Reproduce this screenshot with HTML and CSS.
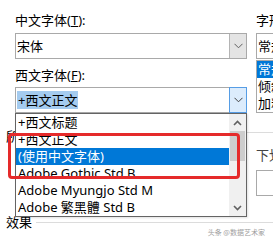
FILE: index.html
```html
<!DOCTYPE html>
<html>
<head>
<meta charset="utf-8">
<link rel="stylesheet" href="styles.css">
</head>
<body>
<div class="dialog">
  <div class="fontrow">
    <div class="col-left">
      <div class="label">中文字体(<u>T</u>):</div>
      <div class="combo">
        <div class="combo-text">宋体</div>
        <div class="combo-btn"><svg width="9" height="6" viewBox="0 0 9 6"><path d="M0.5 0.8 L4.5 4.8 L8.5 0.8" fill="none" stroke="#606060" stroke-width="1"/></svg></div>
      </div>
      <div class="label label2">西文字体(<u>F</u>):</div>
      <div class="combo">
        <div class="combo-text"><span class="sel">+西文正文</span></div>
        <div class="combo-btn hot"><svg width="9" height="6" viewBox="0 0 9 6"><path d="M0.5 0.8 L4.5 4.8 L8.5 0.8" fill="none" stroke="#404040" stroke-width="1"/></svg></div>
      </div>
    </div>
    <div class="col-right">
      <div class="label">字形(<u>Y</u>):</div>
      <div class="textbox">常规</div>
      <div class="listbox">
        <div class="li active">常规</div>
        <div class="li">倾斜</div>
        <div class="li">加粗</div>
      </div>
    </div>
  </div>
  <div class="group-head">
    <span class="gtitle">所有文字</span><i class="rule"></i>
  </div>
  <div class="group-body">
    <div class="col-left"></div>
    <div class="col-right">
      <div class="label dim">下划线线型(<u>U</u>):</div>
      <div class="textbox tall"></div>
    </div>
  </div>
  <div class="group-head fx">
    <span class="gtitle">效果</span><i class="rule"></i>
  </div>
</div>

<div class="dropdown">
  <div class="items">
    <div class="item">+西文标题</div>
    <div class="item">+西文正文</div>
    <div class="item active">(使用中文字体)</div>
    <div class="item">Adobe Gothic Std B</div>
    <div class="item">Adobe Myungjo Std M</div>
    <div class="item">Adobe 繁黑體 Std B</div>
  </div>
  <div class="scrollbar">
    <div class="sb-arrow"><svg width="9" height="6" viewBox="0 0 9 6"><path d="M1 5 L4.5 1.5 L8 5" fill="none" stroke="#606060" stroke-width="1.6"/></svg></div>
    <div class="sb-track"><div class="sb-thumb"></div></div>
    <div class="sb-arrow"><svg width="9" height="6" viewBox="0 0 9 6"><path d="M1 1 L4.5 4.5 L8 1" fill="none" stroke="#606060" stroke-width="1.6"/></svg></div>
  </div>
</div>
<div class="annot"></div>
<div class="wm">头条 @数据艺术家</div>
</body>
</html>
```

FILE: styles.css
```css
* { box-sizing: border-box; }
html, body {
  margin: 0;
  padding: 0;
  background: #fff;
}
body {
  width: 273px;
  height: 241px;
  overflow: hidden;
  position: relative;
  font-family: "Noto Sans", "Noto Sans CJK SC", sans-serif;
  font-size: 13px;
  color: #000;
}
.dialog {
  display: flex;
  flex-direction: column;
}
.fontrow {
  display: flex;
  gap: 9px;
  padding-left: 15px;
}
.col-left {
  width: 232px;
  flex: none;
}
.col-right {
  flex: 1;
  min-width: 0;
}
.label {
  margin-top: 11px;
  height: 18px;
  line-height: 18px;
  white-space: nowrap;
  overflow: hidden;
}
.label u { text-decoration: underline; text-underline-offset: 1px; }
.label2 { margin-top: 7px; }
.combo {
  margin-top: 4px;
  height: 26px;
  border: 1px solid #a9a9a9;
  display: flex;
}
.label2 + .combo { margin-top: 3px; }
.combo-text {
  flex: 1;
  padding-left: 1px;
  display: flex;
  align-items: center;
  line-height: 18px;
}
.sel {
  background: #a4cbef;
  padding: 0 1px;
}
.combo-btn {
  width: 17px;
  flex: none;
  background: #e4e4e4;
  border-left: 1px solid #b4b4b4;
  display: flex;
  align-items: center;
  justify-content: center;
}
.combo-btn.hot {
  background: #dcecfc;
  border: 1px solid #569de5;
  margin: -1px -1px -1px 0;
  width: 18px;
}
.textbox {
  margin-top: 4px;
  height: 26px;
  border: 1px solid #a9a9a9;
  border-right: none;
  padding-left: 1px;
  line-height: 24px;
  white-space: nowrap;
  overflow: hidden;
}
.listbox {
  margin-top: 1px;
  border: 1px solid #a9a9a9;
  border-right: none;
  padding: 0;
}
.li {
  height: 17px;
  line-height: 17px;
  padding-left: 1px;
  white-space: nowrap;
  overflow: hidden;
}
.li.active {
  background: #0078d7;
  color: #fff;
}
.group-head {
  display: flex;
  align-items: flex-start;
  padding-left: 6px;
  margin-top: 14px;
  height: 18px;
}
.gtitle {
  line-height: 18px;
  white-space: nowrap;
}
.rule {
  flex: 1;
  height: 1px;
  background: #dcdcdc;
  margin: 5px 0 0 4px;
}
.group-head.fx { margin-top: 17px; }
.group-head.fx .rule { margin-top: 9px; }
.group-body {
  display: flex;
  gap: 9px;
  padding-left: 15px;
}
.group-body .label { margin-top: 1px; }
.dim { color: #444; }
.textbox.tall { margin-top: 6px; }

/* dropdown list overlaying the dialog */
.dropdown {
  position: absolute;
  left: 15px;
  top: 113px;
  width: 232px;
  height: 104px;
  border: 1px solid #646464;
  background: #fff;
  display: flex;
  box-shadow: 1px 1px 2px rgba(0,0,0,0.12);
}
.items {
  flex: 1;
  min-width: 0;
}
.item {
  height: 17px;
  line-height: 17px;
  padding-left: 2px;
  white-space: nowrap;
  overflow: hidden;
}
.item.active {
  background: #0078d7;
  color: #fff;
}
.scrollbar {
  width: 17px;
  flex: none;
  background: #f0f0f0;
  display: flex;
  flex-direction: column;
}
.sb-arrow {
  height: 17px;
  display: flex;
  align-items: center;
  justify-content: center;
}
.sb-track {
  flex: 1;
  padding: 0 1px;
}
.sb-thumb {
  height: 30px;
  background: #cdcdcd;
}
.annot {
  position: absolute;
  left: 8px;
  top: 133px;
  width: 232px;
  height: 46px;
  border: 3px solid #e52a2a;
  border-radius: 4px;
}
.wm {
  position: absolute;
  right: 8px;
  bottom: 4px;
  font-size: 7px;
  line-height: 10px;
  color: #a0a0a0;
  white-space: nowrap;
  font-family: "Noto Sans CJK SC", sans-serif;
}
```
